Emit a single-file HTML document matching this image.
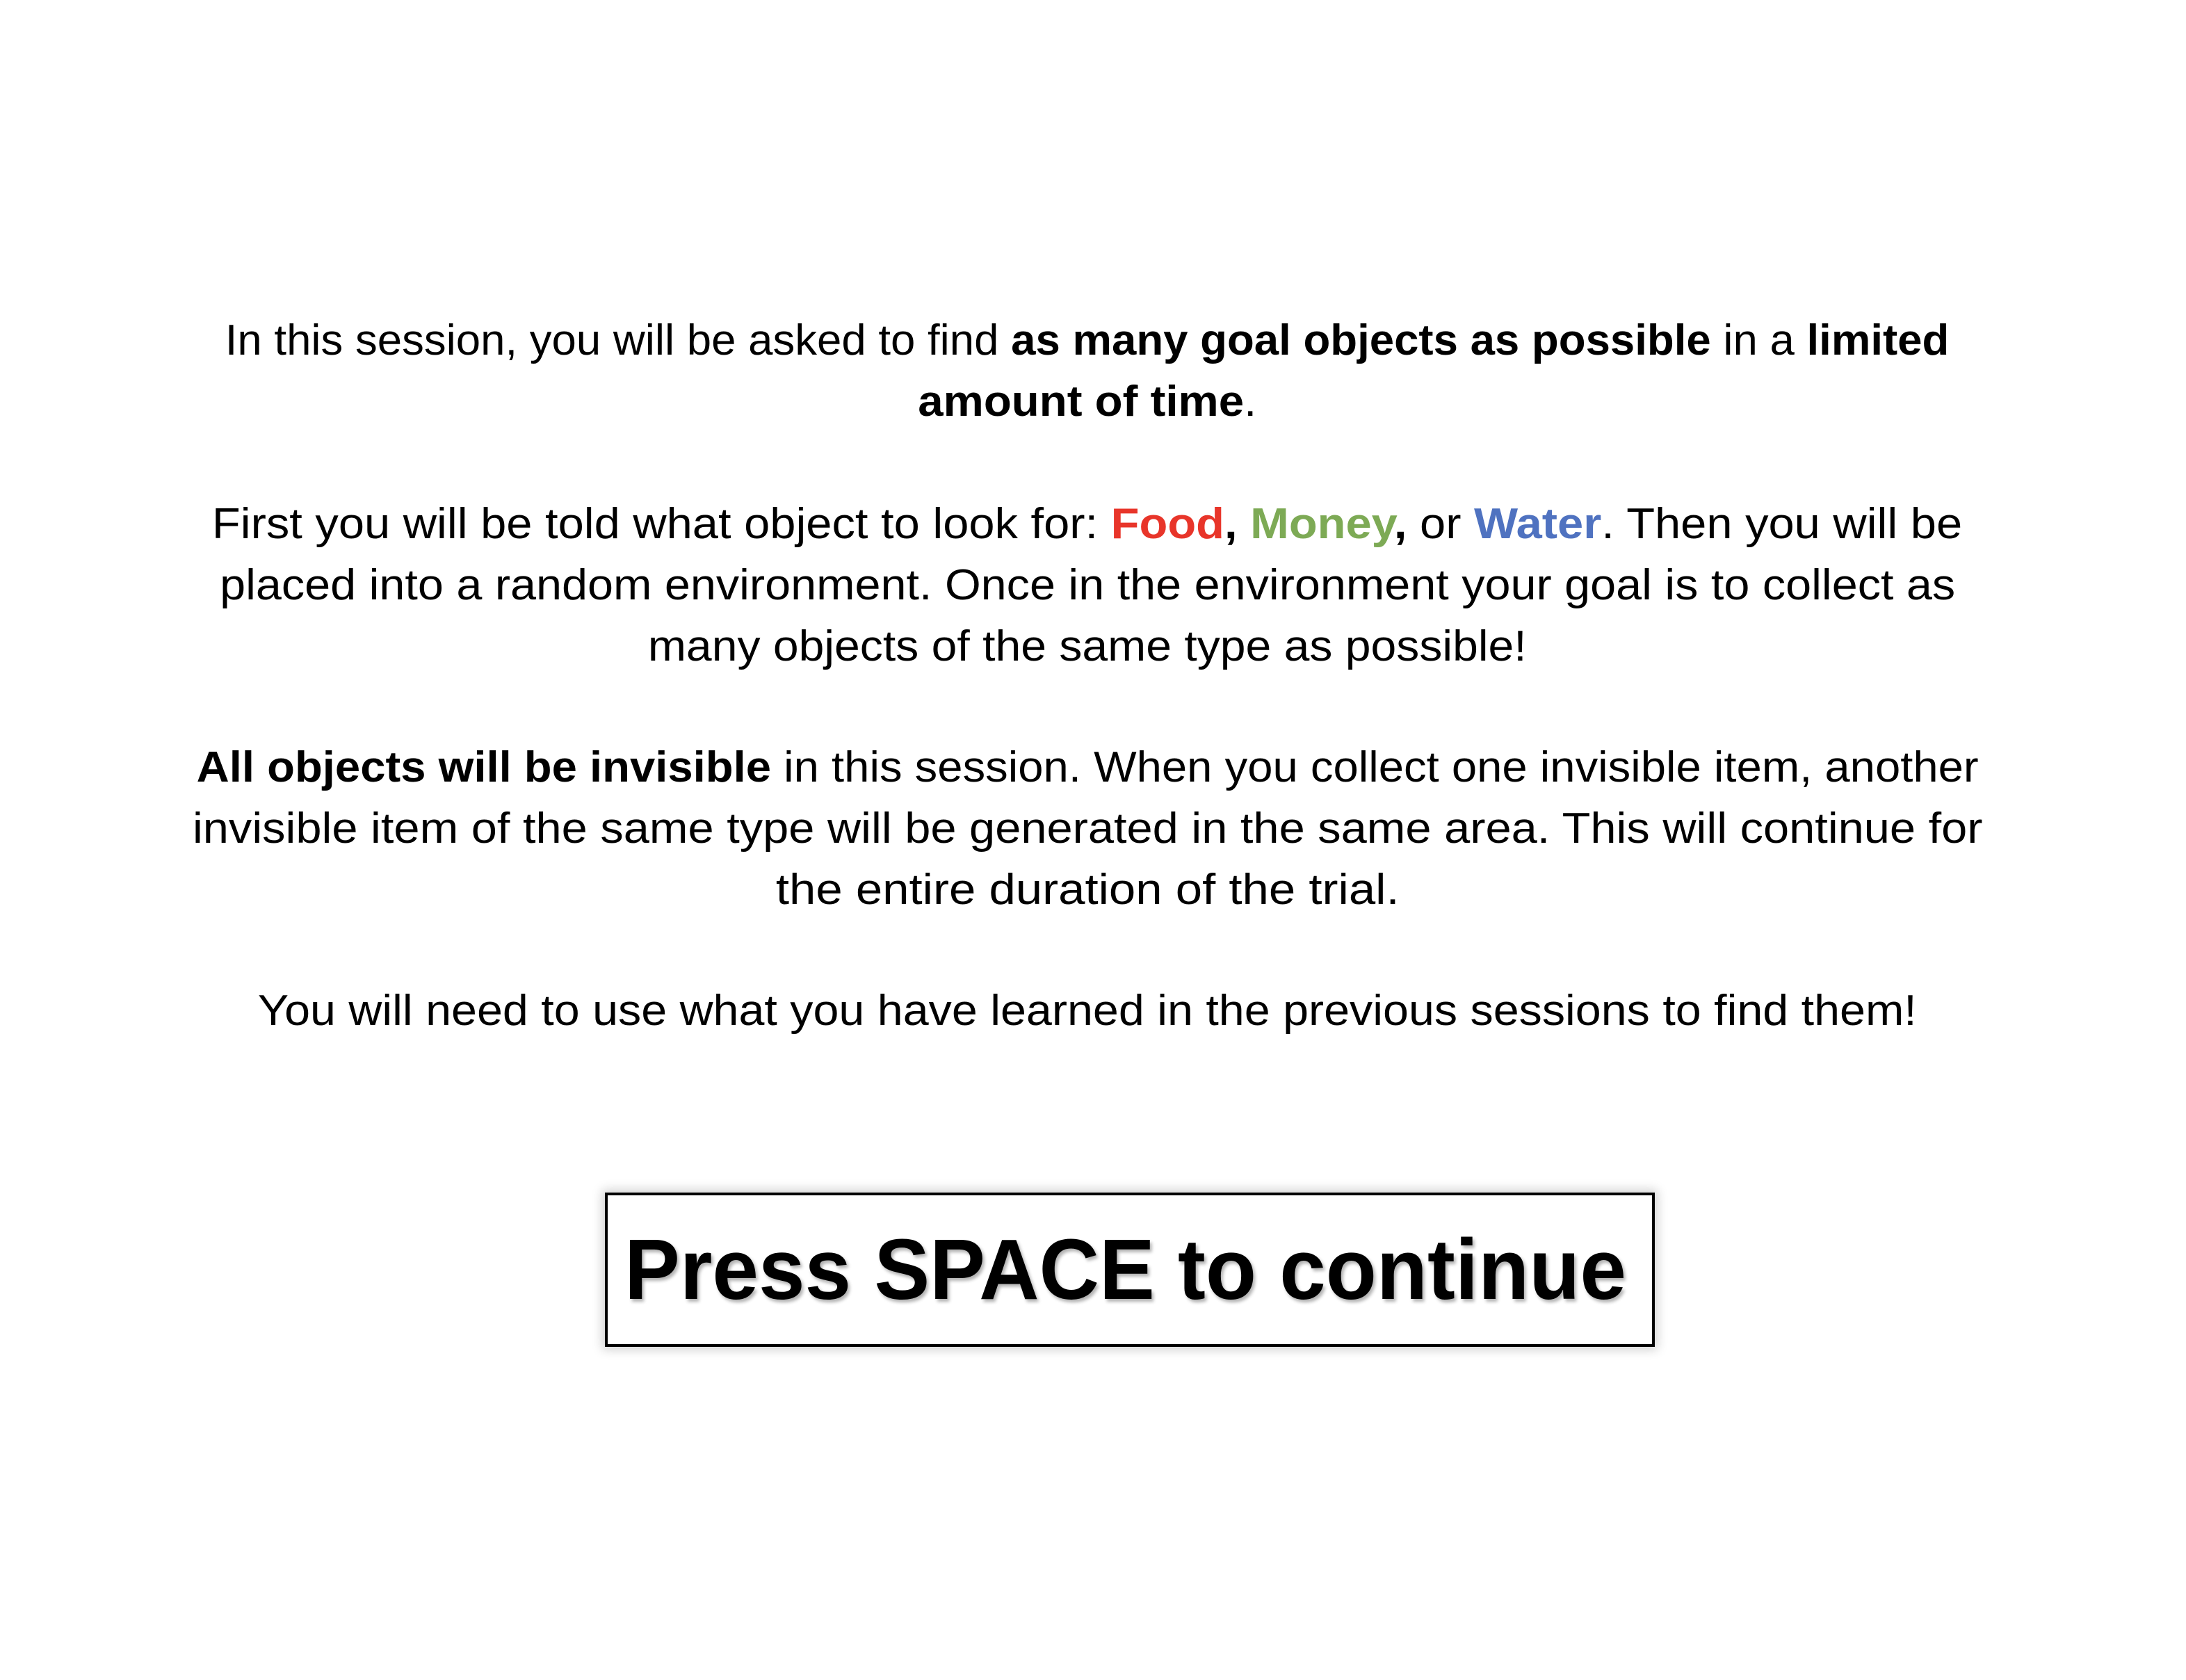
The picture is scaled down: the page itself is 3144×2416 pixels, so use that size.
<!DOCTYPE html>
<html><head><meta charset="utf-8"><style>
html,body{margin:0;padding:0;background:#fff;}
body{width:3144px;height:2416px;position:relative;overflow:hidden;font-family:"Liberation Sans",sans-serif;color:#000;}
.l{position:absolute;left:0;width:3128px;text-align:center;font-size:62px;line-height:88px;height:88px;white-space:nowrap;}
.l span.in{display:inline-block;transform-origin:center;}
b{font-weight:bold;}
.r{color:#e8352a;font-weight:bold}.g{color:#7daa55;font-weight:bold}.bl{color:#4f72c0;font-weight:bold}
.box{position:absolute;left:870px;top:1715px;width:1510px;height:222px;box-sizing:border-box;border:4px solid #000;background:#fff;box-shadow:0 0 14px 4px rgba(0,0,0,0.18);}
.bt{position:absolute;left:0;top:1782px;width:3236px;text-align:center;font-weight:bold;font-size:123px;line-height:90px;white-space:nowrap;text-shadow:3px 4px 5px rgba(0,0,0,0.3);}
.bt span{display:inline-block;transform:scaleX(0.973);transform-origin:center;}
</style></head><body>
<div class="l" style="top:446px"><span class="in" style="transform:scaleX(1.025)">In this session, you will be asked to find <b>as many goal objects as possible</b> in a <b>limited</b></span></div>
<div class="l" style="top:534px"><span class="in" style="transform:scaleX(1.055)"><b>amount of time</b>.</span></div>
<div class="l" style="top:710px"><span class="in" style="transform:scaleX(1.078)">First you will be told what object to look for: <span class="r">Food</span><b>,</b> <span class="g">Money</span><b>,</b> or <span class="bl">Water</span>. Then you will be</span></div>
<div class="l" style="top:798px"><span class="in" style="transform:scaleX(1.073)">placed into a random environment. Once in the environment your goal is to collect as</span></div>
<div class="l" style="top:886px"><span class="in" style="transform:scaleX(1.066)">many objects of the same type as possible!</span></div>
<div class="l" style="top:1060px"><span class="in" style="transform:scaleX(1.052)"><b>All objects will be invisible</b> in this session. When you collect one invisible item, another</span></div>
<div class="l" style="top:1148px"><span class="in" style="transform:scaleX(1.077)">invisible item of the same type will be generated in the same area. This will continue for</span></div>
<div class="l" style="top:1236px"><span class="in" style="transform:scaleX(1.112)">the entire duration of the trial.</span></div>
<div class="l" style="top:1410px"><span class="in" style="transform:scaleX(1.071)">You will need to use what you have learned in the previous sessions to find them!</span></div>
<div class="box"></div>
<div class="bt"><span>Press SPACE to continue</span></div>
</body></html>
